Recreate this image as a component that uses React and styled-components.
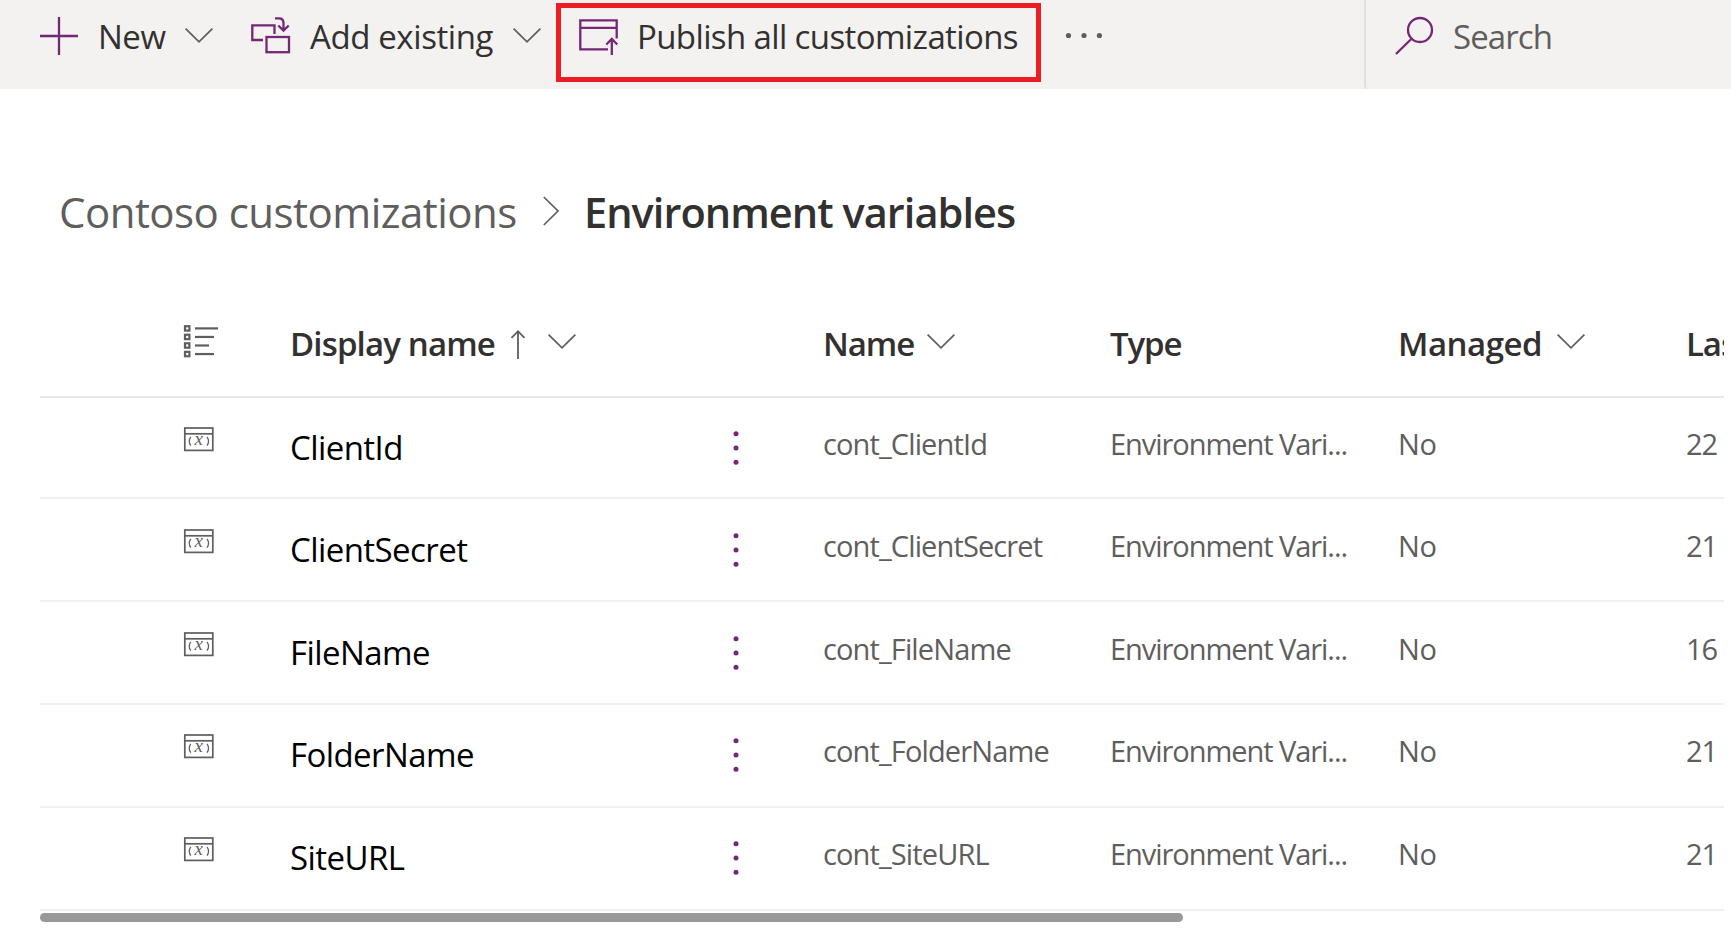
import React from "react";
import styled, { createGlobalStyle } from "styled-components";

const purple = "#742774";
const ink = "#323130";
const muted = "#605e5c";

const GlobalStyle = createGlobalStyle`
  *, *::before, *::after { box-sizing: border-box; }
  body {
    margin: 0;
    background: #fff;
    overflow: hidden;
    font-family: "Segoe UI", "Open Sans", "Noto Sans", sans-serif;
    color: ${ink};
  }
  svg { display: block; overflow: visible; flex: none; }
`;

const Page = styled.div`
  display: flex;
  flex-direction: column;
  width: 1731px;
  height: 939px;
  overflow: hidden;
`;

const Toolbar = styled.header`
  display: flex;
  height: 89px;
  background: #f3f2f1;
`;

const Commands = styled.nav`
  display: flex;
  align-items: flex-start;
  width: 1364px;
  padding: 3px 0 0 40px;
`;

const Command = styled.button`
  display: flex;
  align-items: center;
  width: ${(p) => p.$width}px;
  height: 66px;
  padding: 0;
  border: 0;
  background: none;
  font: inherit;
  color: ${ink};
`;

const HighlightedCommand = styled(Command)`
  height: 79px;
  padding: 0 0 13px 18px;
  border: 5px solid #ed1c24;
`;

const OverflowCommand = styled(Command)`
  padding-left: 24px;
`;

const CommandLabel = styled.span`
  width: ${(p) => p.$width}px;
  margin-left: ${(p) => p.$gap || 20}px;
  padding-top: 2px;
  font-size: 33px;
  line-height: 44px;
  letter-spacing: ${(p) => p.$tracking || 0}px;
  white-space: nowrap;
  text-align: left;
`;

const SearchBox = styled.label`
  display: flex;
  flex: 1;
  padding: 16px 0 0 30px;
  border-left: 2px solid #e1dfdd;
  border-bottom-left-radius: 4px;
`;

const SearchLabel = styled.span`
  margin: -1px 0 0 18px;
  font-size: 33px;
  line-height: 44px;
  letter-spacing: -0.9px;
  color: ${muted};
`;

const Breadcrumb = styled.div`
  display: flex;
  align-items: center;
  height: 60px;
  margin-top: 92px;
  padding-left: 59px;
  white-space: nowrap;
`;

const Crumb = styled.span`
  width: 484px;
  padding-top: 2px;
  color: ${muted};
  font-size: 42px;
  line-height: 58px;
  letter-spacing: -0.52px;
`;

const Current = styled.h1`
  margin: 0 0 0 25px;
  padding-top: 2px;
  font-size: 41.5px;
  font-weight: 600;
  line-height: 58px;
  letter-spacing: -0.95px;
`;

const Table = styled.section`
  display: flex;
  flex-direction: column;
  width: 1684px;
  margin: 49px 0 0 40px;
  overflow: hidden;
`;

const Row = styled.div`
  display: grid;
  grid-template-columns: 250px 434px 99px 287px 288px 288px 38px;
  height: ${(p) => p.$height}px;
  padding-top: ${(p) => p.$top || 0}px;
  border-bottom: 2px solid ${(p) => (p.$header ? "#e8e8e8" : "#f1f1f1")};
`;

const IconCell = styled.div`
  padding: ${(p) => p.$top}px 0 0 143px;
`;

const HeaderCell = styled.div`
  display: flex;
  height: 44px;
  font-size: 33px;
  font-weight: 600;
  line-height: 46px;
  white-space: nowrap;
`;

const HeaderLabel = styled.span`
  width: ${(p) => p.$width}px;
  letter-spacing: ${(p) => p.$tracking}px;
`;

const HeaderIcon = styled.span`
  margin: ${(p) => p.$top}px 0 0 ${(p) => p.$left || 0}px;
`;

const PrimaryCell = styled.div`
  padding-top: 28px;
  font-size: 33px;
  line-height: 44px;
  letter-spacing: -0.57px;
  color: #000;
`;

const MenuCell = styled.div`
  padding: 33px 0 0 9px;
`;

const Cell = styled.div`
  padding-top: 26px;
  font-size: 29px;
  line-height: 40px;
  letter-spacing: ${(p) => p.$tracking}px;
  white-space: nowrap;
  color: ${muted};
`;

const Scrollbar = styled.div`
  width: 1143px;
  height: 9px;
  margin: 2px 0 0 40px;
  border-radius: 5px;
  background: #999;
`;

const Chevron = () => (
  <svg width="28" height="16" fill="none" stroke={muted} strokeWidth="1.7">
    <path d="M0.6 0.6 14 13.8 27.4 0.6" />
  </svg>
);

const PlusIcon = () => (
  <svg width="38" height="38" fill="none" stroke={purple} strokeWidth="2.3">
    <path d="M0 19H38M19 0V38" />
  </svg>
);

const AddExistingIcon = () => (
  <svg width="39" height="38" fill="none" stroke={purple} strokeWidth="2.3">
    <path d="M12 23H1.3V8.3H23.5V17M24 1.3H28Q32.5 1.3 32.5 6V13.5M27.3 8.5 32.5 13.6 37.7 8.5" />
    <rect x="15.5" y="20" width="22.5" height="15.2" />
  </svg>
);

const PublishIcon = () => (
  <svg width="39" height="38" fill="none" stroke={purple} strokeWidth="2.3">
    <path d="M29 32.3H1.3V3.3H37.7V21.5M1.3 10.8H37.7M32.8 38V22.5M27.3 27.5 32.8 22 38.3 27.5" />
  </svg>
);

const MoreIcon = () => (
  <svg width="38" height="8" fill={muted}>
    <circle cx="3.5" cy="3.5" r="2.6" />
    <circle cx="19" cy="3.5" r="2.6" />
    <circle cx="34.4" cy="3.5" r="2.6" />
  </svg>
);

const SearchIcon = () => (
  <svg width="39" height="40" fill="none" stroke={purple} strokeWidth="2.3">
    <circle cx="24" cy="14" r="12" />
    <path d="M15.5 22.7 0 38" />
  </svg>
);

const CrumbIcon = () => (
  <svg width="16" height="29" fill="none" stroke={muted} strokeWidth="1.7">
    <path d="M0.8 0 15 14 0.8 28" />
  </svg>
);

const SortIcon = () => (
  <svg width="14" height="30" fill="none" stroke={muted} strokeWidth="1.8">
    <path d="M7 29V1.2M0.5 7.8 7 1.2 13.5 7.8" />
  </svg>
);

const ListIcon = () => (
  <svg width="35" height="33" fill="none" stroke={muted} strokeWidth="2.2">
    {[23, 19, 14, 19].map((length, i) => (
      <g key={i} transform={`translate(0 ${i * 8.55})`}>
        <rect x="2" y="1.2" width="4.4" height="4.4" />
        <path d={`M12 3.4H${12 + length}`} />
      </g>
    ))}
  </svg>
);

const VariableIcon = () => (
  <svg width="31" height="25" fill="none" stroke={muted} strokeWidth="1.7">
    <rect x="1.8" y="1" width="28" height="22.4" />
    <path d="M1.8 6.8H29.8" />
    <path d="M7.8 9.8Q4.6 14.2 7.8 18.6M24 9.8Q27.2 14.2 24 18.6" strokeWidth="1.2" />
    <text x="15.8" y="18.2" textAnchor="middle" fill={muted} stroke="none" fontFamily="Liberation Serif, serif" fontStyle="italic" fontSize="19">x</text>
  </svg>
);

const RowMenuIcon = () => (
  <svg width="6" height="36" fill={purple}>
    <circle cx="3" cy="2.8" r="2.5" />
    <circle cx="3" cy="17" r="2.5" />
    <circle cx="3" cy="31.2" r="2.5" />
  </svg>
);

const variables = [
  { label: "ClientId", name: "cont_ClientId", modified: "22" },
  { label: "ClientSecret", name: "cont_ClientSecret", modified: "21" },
  { label: "FileName", name: "cont_FileName", modified: "16" },
  { label: "FolderName", name: "cont_FolderName", modified: "21" },
  { label: "SiteURL", name: "cont_SiteURL", modified: "21" },
];

export default function App() {
  return (
    <Page>
      <GlobalStyle />
      <Toolbar>
        <Commands>
          <Command $width={211}>
            <PlusIcon />
            <CommandLabel $width={87} $tracking={-0.5}>New</CommandLabel>
            <Chevron />
          </Command>
          <Command $width={305}>
            <AddExistingIcon />
            <CommandLabel $width={203} $tracking={-0.4}>Add existing</CommandLabel>
            <Chevron />
          </Command>
          <HighlightedCommand $width={485}>
            <PublishIcon />
            <CommandLabel $width={390} $gap={19} $tracking={-0.62}>Publish all customizations</CommandLabel>
          </HighlightedCommand>
          <OverflowCommand $width={80}>
            <MoreIcon />
          </OverflowCommand>
        </Commands>
        <SearchBox>
          <SearchIcon />
          <SearchLabel>Search</SearchLabel>
        </SearchBox>
      </Toolbar>
      <Breadcrumb>
        <Crumb>Contoso customizations</Crumb>
        <CrumbIcon />
        <Current>Environment variables</Current>
      </Breadcrumb>
      <Table>
        <Row $header $height={108} $top={31}>
          <IconCell $top={4}><ListIcon /></IconCell>
          <HeaderCell>
            <HeaderLabel $width={221} $tracking={-0.85}>Display name</HeaderLabel>
            <HeaderIcon $top={9}><SortIcon /></HeaderIcon>
            <HeaderIcon $top={13} $left={23}><Chevron /></HeaderIcon>
          </HeaderCell>
          <span />
          <HeaderCell>
            <HeaderLabel $width={104} $tracking={-1.1}>Name</HeaderLabel>
            <HeaderIcon $top={13}><Chevron /></HeaderIcon>
          </HeaderCell>
          <HeaderCell><HeaderLabel $tracking={-1.1}>Type</HeaderLabel></HeaderCell>
          <HeaderCell>
            <HeaderLabel $width={159} $tracking={-0.5}>Managed</HeaderLabel>
            <HeaderIcon $top={13}><Chevron /></HeaderIcon>
          </HeaderCell>
          <HeaderCell><HeaderLabel $tracking={-1.1}>Las</HeaderLabel></HeaderCell>
        </Row>
        {variables.map((v, i) => (
          <Row key={v.name} $height={i === 0 ? 101 : 103} $top={i === 1 || i === 2 ? 1 : 0}>
            <IconCell $top={29}><VariableIcon /></IconCell>
            <PrimaryCell>{v.label}</PrimaryCell>
            <MenuCell><RowMenuIcon /></MenuCell>
            <Cell $tracking={-0.87}>{v.name}</Cell>
            <Cell $tracking={-1.05}>Environment Vari...</Cell>
            <Cell $tracking={-0.4}>No</Cell>
            <Cell $tracking={-1.2}>{v.modified}</Cell>
          </Row>
        ))}
      </Table>
      <Scrollbar />
    </Page>
  );
}
